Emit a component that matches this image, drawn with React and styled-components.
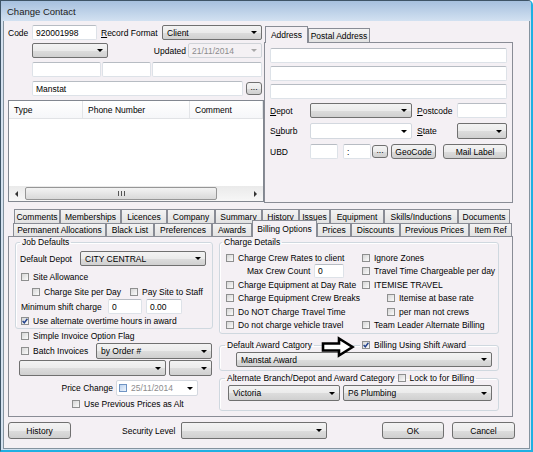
import React from 'react';
import styled, { createGlobalStyle } from 'styled-components';

const GlobalStyle = createGlobalStyle`
  html, body { margin: 0; padding: 0; background: #fff; }
  body {
    font-family: "Liberation Sans", Arial, sans-serif;
    font-size: 8.5px;
    color: #000;
  }
  * { box-sizing: border-box; }
`;

const row1Tabs = [
  ['Comments', 46], ['Memberships', 61], ['Licences', 46], ['Company', 48],
  ['Summary', 47], ['History', 37], ['Issues', 31], ['Equipment', 54],
  ['Skills/Inductions', 74], ['Documents', 52],
];

const row2Tabs = [
  ['Permanent Allocations', 93], ['Black List', 48], ['Preferences', 58],
  ['Awards', 40], ['Billing Options', 65, true], ['Prices', 34],
  ['Discounts', 49], ['Previous Prices', 69], ['Item Ref', 43],
];

const chargeRows = [
  ['Charge Crew Rates to client', 'Ignore Zones'],
  ['MAX', 'Travel Time Chargeable per day'],
  ['Charge Equipment at Day Rate', 'ITEMISE TRAVEL'],
  ['Charge Equipment Crew Breaks', '>Itemise at base rate'],
  ['Do NOT Charge Travel Time', '>per man not crews'],
  ['Do not charge vehicle travel', 'Team Leader Alternate Billing'],
];

const Combo = ({ w, h = 15, ml, text, edit }) => (
  <ComboBox $w={w} $h={h} $ml={ml} $edit={edit}>
    <ComboText>{text}</ComboText>
    <DropArrow />
  </ComboBox>
);

const Check = ({ label, checked, ml, w }) => (
  <CheckItem $ml={ml} $w={w}>
    <Box>
      {checked && (
        <svg width="6" height="6" viewBox="0 0 6 6">
          <path d="M0.6 3 L2.3 4.8 L5.4 0.8" fill="none" stroke="#24428c" strokeWidth="1.4" />
        </svg>
      )}
    </Box>
    {label && <span>{label}</span>}
  </CheckItem>
);

const App = () => {
  return (
    <Window>
      <GlobalStyle />
      <TitleBar>Change Contact</TitleBar>
      <Client>
        <Top>
          <LeftCol>
            <Row $mt={4}>
              <Label $w={24}>Code</Label>
              <Field $w={65}>920001998</Field>
              <Label $w={61} $ml={4}><u>R</u>ecord Format</Label>
              <Combo w={100} text="Client" />
            </Row>
            <Row $mt={3}>
              <Label $w={24} />
              <Combo w={76} />
              <Label $w={80} $right $pr={2}>Updated</Label>
              <DateBox $w={74} $dim>
                <ComboText $dim>21/11/2014</ComboText>
                <DropArrow $dim />
              </DateBox>
            </Row>
            <Row $mt={4}>
              <Label $w={24} />
              <Field $w={69} />
              <Field $w={49} $ml={1} />
              <Field $w={110} $ml={1} />
            </Row>
            <Row $mt={4}>
              <Label $w={24} />
              <Field $w={211}>Manstat</Field>
              <SmallBtn $ml={3}>...</SmallBtn>
            </Row>
            <ListBox>
              <ListHeader>
                <HeadCell $w={74}>Type</HeadCell>
                <HeadCell $w={107}>Phone Number</HeadCell>
                <HeadCell>Comment</HeadCell>
              </ListHeader>
              <ListBody />
              <HScroll>
                <ScrollBtn><TriLeft /></ScrollBtn>
                <Thumb><Grip /></Thumb>
                <ScrollBtn $right><TriRight /></ScrollBtn>
              </HScroll>
            </ListBox>
          </LeftCol>

          <AddrTabs>
            <TabStrip $h={17} $pl={1}>
              <Tab $w={43} $h={14} $active>Address</Tab>
              <Tab $w={62} $h={14}>Postal Address</Tab>
            </TabStrip>
            <AddrPanel>
              <Field $w={237} />
              <Field $w={237} $mt={3} />
              <Field $w={237} $mt={3} />
              <Row $mt={4}>
                <Label $w={40}><u>D</u>epot</Label>
                <Combo w={102} />
                <Label $w={40} $ml={5}><u>P</u>ostcode</Label>
                <Field $w={50} />
              </Row>
              <Row $mt={5} $h={16}>
                <Label $w={40}>S<u>u</u>burb</Label>
                <Combo w={102} h={16} edit />
                <Label $w={40} $ml={5}><u>S</u>tate</Label>
                <Combo w={50} h={16} />
              </Row>
              <Row $mt={5}>
                <Label $w={40}>UBD</Label>
                <Field $w={28} />
                <Field $w={28} $ml={5}>:</Field>
                <SmallBtn $ml={1}>...</SmallBtn>
                <Btn $w={45} $h={15} $ml={3}>GeoCode</Btn>
                <Btn $w={64} $h={15} $ml={7}>Mail Label</Btn>
              </Row>
            </AddrPanel>
          </AddrTabs>
        </Top>

        <Tabs>
          <TabStrip $h={14} $pl={6}>
            {row1Tabs.map(([name, w]) => (
              <Tab key={name} $w={w} $h={14}>{name}</Tab>
            ))}
          </TabStrip>
          <TabStrip $h={13} $pl={5} $z={2}>
            {row2Tabs.map(([name, w, active]) => (
              <Tab key={name} $w={w} $h={13} $active={active}>{name}</Tab>
            ))}
          </TabStrip>
          <Panel>
            <LeftPane>
              <Group $h={92}>
                <Legend>Job Defaults</Legend>
                <Row $mt={4}>
                  <Label $w={60}>Default Depot</Label>
                  <Combo w={126} text="CITY CENTRAL" />
                </Row>
                <Row $mt={5} $h={12}>
                  <Check ml={1} label="Site Allowance" />
                </Row>
                <Row $mt={3} $h={12}>
                  <Check ml={12} w={98} label="Charge Site per Day" />
                  <Check label="Pay Site to Staff" />
                </Row>
                <Row $mt={1}>
                  <Label $w={87} $ml={1}>Minimum shift charge</Label>
                  <Field $w={34}>0</Field>
                  <Field $w={36} $ml={4}>0.00</Field>
                </Row>
                <Row $mt={1} $h={12}>
                  <Check ml={1} checked label="Use alternate overtime hours in award" />
                </Row>
              </Group>
              <Row $mt={1} $h={12}>
                <Check ml={6} label="Simple Invoice Option Flag" />
              </Row>
              <Row $mt={1} $h={16}>
                <Check ml={6} w={75} label="Batch Invoices" />
                <Combo w={116} h={16} text="by Order #" />
              </Row>
              <Row $mt={1} $h={16}>
                <Combo w={147} h={16} ml={4} />
                <Combo w={43} h={16} ml={3} />
              </Row>
              <Row $mt={4} $h={16}>
                <Label $w={101} $right $pr={3}>Price Change</Label>
                <DateBox $w={82} $h={16}>
                  <MiniCheck />
                  <ComboText $dim>25/11/2014</ComboText>
                  <DropArrow />
                </DateBox>
              </Row>
              <Row $mt={2} $h={12}>
                <Check ml={57} label="Use Previous Prices as Alt" />
              </Row>
            </LeftPane>

            <RightPane>
              <Group $h={97} $pl={6}>
                <Legend $ml={-4}>Charge Details</Legend>
                <ChargeGrid>
                  {chargeRows.flatMap(([a, b]) => [
                    a === 'MAX' ? (
                      <Row key={a} $h={13.5}>
                        <Label $w={67} $ml={21}>Max Crew Count</Label>
                        <Field $w={30} $h={14}>0</Field>
                      </Row>
                    ) : (
                      <Check key={a} label={a} />
                    ),
                    b.startsWith('>') ? (
                      <Check key={b} ml={25} label={b.slice(1)} />
                    ) : (
                      <Check key={b} label={b} />
                    ),
                  ])}
                </ChargeGrid>
              </Group>

              <Stack $mt={6}>
                <Group $h={31} $pl={6}>
                  <Legend $ml={-1}>Default Award Catgory</Legend>
                  <Row $mt={2} $h={15}>
                    <Combo w={256} ml={10} text="Manstat Award" />
                  </Row>
                </Group>
                <PointArrow width="34" height="22" viewBox="0 0 34 22">
                  <path
                    d="M2 7.5 H18 V2.5 L31.5 11 L18 19.5 V14.5 H2 Z"
                    fill="#fff"
                    stroke="#000"
                    strokeWidth="2.6"
                  />
                </PointArrow>
                <OnBorder>
                  <Check checked label="Billing Using Shift Award" />
                </OnBorder>
              </Stack>

              <Group $h={38} $pl={6} $mt={2}>
                <Legend $ml={-1}>
                  <LegendInner>
                    Alternate Branch/Depot and Award Category
                    <Check ml={3} label="Lock to for Billing" />
                  </LegendInner>
                </Legend>
                <Row $mt={2} $h={16}>
                  <Combo w={112} h={16} ml={2} text="Victoria" />
                  <Combo w={149} h={16} ml={3} text="P6 Plumbing" />
                </Row>
              </Group>
            </RightPane>
          </Panel>
        </Tabs>

        <Footer>
          <Btn $w={63} $h={17}>History</Btn>
          <Label $w={59} $ml={51}>Security Level</Label>
          <Combo w={146} h={17} />
          <Btn $w={62} $h={17} $ml={55}>OK</Btn>
          <Btn $w={63} $h={17} $ml={8}>Cancel</Btn>
        </Footer>
      </Client>
    </Window>
  );
};

const Window = styled.div`
  width: 533px;
  height: 452px;
  display: flex;
  flex-direction: column;
  background: #d4e1ef;
  border-top: 1px solid #3e5466;
  border-left: 1px solid #3e5466;
  border-right: 2px solid #1fb0e2;
  border-bottom: 2px solid #1fb0e2;
  border-top-right-radius: 5px;
  overflow: hidden;
`;

const TitleBar = styled.div`
  height: 20px;
  flex: none;
  display: flex;
  align-items: center;
  padding-left: 6px;
  background: linear-gradient(#a6c0de, #d2e1f1);
  font-size: 9.5px;
  color: #1b1b1b;
`;

const Client = styled.div`
  flex: 1;
  margin: 0 1px 1px 2px;
  padding-left: 4px;
  background: #f4f0f4;
  border: 1px solid #84939f;
  border-top: none;
  display: flex;
  flex-direction: column;
`;

const Top = styled.div`
  display: flex;
  height: 183px;
  flex: none;
`;

const LeftCol = styled.div`
  width: 256px;
  flex: none;
  display: flex;
  flex-direction: column;
`;

const Row = styled.div`
  display: flex;
  align-items: center;
  flex: none;
  height: ${p => p.$h || 15}px;
  margin-top: ${p => p.$mt || 0}px;
`;

const Label = styled.span`
  flex: none;
  width: ${p => (p.$w ? `${p.$w}px` : 'auto')};
  margin-left: ${p => p.$ml || 0}px;
  padding-right: ${p => p.$pr || 0}px;
  text-align: ${p => (p.$right ? 'right' : 'left')};
  white-space: nowrap;
`;

const Field = styled.div`
  flex: none;
  width: ${p => p.$w}px;
  height: ${p => p.$h || 15}px;
  margin-left: ${p => p.$ml || 0}px;
  margin-top: ${p => p.$mt || 0}px;
  display: flex;
  align-items: center;
  padding: 0 3px;
  background: #fff;
  border: 1px solid #dde2e8;
  border-top-color: #b7bcc3;
  border-radius: 2px;
  white-space: nowrap;
  overflow: hidden;
`;

const ComboBox = styled.div`
  flex: none;
  width: ${p => p.$w}px;
  height: ${p => p.$h}px;
  margin-left: ${p => p.$ml || 0}px;
  display: flex;
  align-items: center;
  padding-left: 3px;
  border: 1px solid ${p => (p.$edit ? '#d3d8df' : '#707070')};
  border-radius: 2px;
  background: ${p =>
    p.$edit
      ? '#fff'
      : 'linear-gradient(#f3f3f3 0%, #ebebeb 50%, #dddddd 51%, #d0d0d0 100%)'};
  white-space: nowrap;
  overflow: hidden;
`;

const DateBox = styled(ComboBox)`
  height: ${p => p.$h || 15}px;
  background: ${p => (p.$dim ? '#f4f1f4' : '#fff')};
  border: 1px solid ${p => (p.$dim ? '#cfd3d8' : '#d3d8df')};
  padding-left: 2px;
`;

const ComboText = styled.span`
  color: ${p => (p.$dim ? '#8c8c8c' : '#000')};
  margin-left: 1px;
`;

const DropArrow = styled.span`
  margin-left: auto;
  margin-right: 4px;
  flex: none;
  width: 0;
  height: 0;
  border-left: 3px solid transparent;
  border-right: 3px solid transparent;
  border-top: 3px solid ${p => (p.$dim ? '#a8a8a8' : '#000')};
`;

const MiniCheck = styled.span`
  width: 8px;
  height: 8px;
  flex: none;
  margin-right: 3px;
  border: 1px solid #6f94c4;
  background: linear-gradient(135deg, #bcd3ef, #eef4fb);
`;

const Btn = styled.button`
  flex: none;
  width: ${p => p.$w}px;
  height: ${p => p.$h}px;
  margin-left: ${p => p.$ml || 0}px;
  padding: 0;
  font: inherit;
  color: #000;
  border: 1px solid #707070;
  border-radius: 3px;
  background: linear-gradient(#f3f3f3 0%, #ebebeb 50%, #dddddd 51%, #cfcfcf 100%);
  white-space: nowrap;
`;

const SmallBtn = styled(Btn)`
  width: 16px;
  height: 13px;
  line-height: 8px;
  padding-bottom: 3px;
`;

const CheckItem = styled.label`
  display: flex;
  align-items: center;
  gap: 4px;
  flex: none;
  width: ${p => (p.$w ? `${p.$w}px` : 'auto')};
  margin-left: ${p => p.$ml || 0}px;
  white-space: nowrap;
`;

const Box = styled.span`
  width: 8px;
  height: 8px;
  flex: none;
  display: flex;
  align-items: center;
  justify-content: center;
  border: 1px solid #8e8f8f;
  background: linear-gradient(135deg, #d6d6d6, #fbfbfb);
`;

const ListBox = styled.div`
  margin-top: 4px;
  width: 256px;
  height: 102px;
  flex: none;
  display: flex;
  flex-direction: column;
  background: #fff;
  border: 1px solid #828790;
`;

const ListHeader = styled.div`
  display: flex;
  height: 18px;
  flex: none;
  background: linear-gradient(#fff, #f6f7f9);
  border-bottom: 1px solid #e1e3e6;
`;

const HeadCell = styled.div`
  width: ${p => (p.$w ? `${p.$w}px` : 'auto')};
  flex: ${p => (p.$w ? 'none' : 1)};
  display: flex;
  align-items: center;
  padding-left: 5px;
  border-right: 1px solid #e3e5e8;
  white-space: nowrap;
`;

const ListBody = styled.div`
  flex: 1;
`;

const HScroll = styled.div`
  height: 15px;
  flex: none;
  display: flex;
  align-items: center;
  background: linear-gradient(#eaeaea, #f7f7f7);
`;

const ScrollBtn = styled.div`
  width: 15px;
  height: 15px;
  flex: none;
  margin-left: ${p => (p.$right ? 'auto' : 0)};
  display: flex;
  align-items: center;
  justify-content: center;
`;

const TriLeft = styled.span`
  width: 0;
  height: 0;
  border-top: 3px solid transparent;
  border-bottom: 3px solid transparent;
  border-right: 3px solid #333;
`;

const TriRight = styled(TriLeft)`
  border-right: none;
  border-left: 3px solid #333;
`;

const Thumb = styled.div`
  width: 192px;
  height: 13px;
  margin-left: 1px;
  display: flex;
  align-items: center;
  justify-content: center;
  border: 1px solid #969696;
  border-radius: 2px;
  background: linear-gradient(#f3f3f3, #d9d9d9);
`;

const Grip = styled.span`
  width: 7px;
  height: 5px;
  background: repeating-linear-gradient(90deg, #555 0 1px, transparent 1px 3px);
`;

const AddrTabs = styled.div`
  width: 249px;
  flex: none;
  margin-top: 4px;
  display: flex;
  flex-direction: column;
`;

const TabStrip = styled.div`
  display: flex;
  align-items: flex-end;
  flex: none;
  height: ${p => p.$h}px;
  padding-left: ${p => p.$pl}px;
  position: relative;
  z-index: ${p => p.$z || 1};
`;

const Tab = styled.div`
  flex: none;
  width: ${p => p.$w}px;
  height: ${p => (p.$active ? 17 : p.$h)}px;
  margin-bottom: ${p => (p.$active ? -1 : 0)}px;
  display: flex;
  align-items: center;
  justify-content: center;
  padding-bottom: ${p => (p.$active ? 1 : 0)}px;
  border: 1px solid #898c95;
  border-bottom: none;
  background: ${p => (p.$active ? '#f4f0f4' : 'linear-gradient(#f3f3f3, #e2e2e2)')};
  white-space: nowrap;
  position: relative;
  z-index: ${p => (p.$active ? 3 : 1)};
`;

const AddrPanel = styled.div`
  height: 161px;
  flex: none;
  padding: 5px 0 0 5px;
  border: 1px solid #898c95;
  display: flex;
  flex-direction: column;
`;

const Tabs = styled.div`
  margin-top: 5px;
  width: 505px;
  flex: none;
  display: flex;
  flex-direction: column;
`;

const Panel = styled.div`
  height: 181px;
  flex: none;
  display: flex;
  gap: 6px;
  padding-left: 6px;
  border: 1px solid #898c95;
`;

const LeftPane = styled.div`
  width: 198px;
  flex: none;
  display: flex;
  flex-direction: column;
`;

const RightPane = styled.div`
  width: 280px;
  flex: none;
  display: flex;
  flex-direction: column;
`;

const Group = styled.fieldset`
  margin: ${p => p.$mt || 0}px 0 0 0;
  padding: 0 4px 0 ${p => p.$pl ?? 4}px;
  height: ${p => p.$h}px;
  flex: none;
  min-width: 0;
  border: 1px solid #cfd8df;
  border-radius: 3px;
  box-shadow: inset 1px 1px 0 #fff;
`;

const Legend = styled.legend`
  padding: 0 2px;
  margin-left: ${p => p.$ml || 0}px;
  height: 10px;
  line-height: 10px;
  white-space: nowrap;
`;

const LegendInner = styled.span`
  display: inline-flex;
  align-items: center;
`;

const ChargeGrid = styled.div`
  display: grid;
  grid-template-columns: 136px 1fr;
  grid-auto-rows: 13.5px;
  align-items: center;
  margin-top: 4px;
`;

const Stack = styled.div`
  position: relative;
  margin-top: ${p => p.$mt || 0}px;
  flex: none;
`;

const PointArrow = styled.svg`
  position: absolute;
  left: 102px;
  top: -4px;
`;

const OnBorder = styled.div`
  position: absolute;
  left: 141px;
  top: 0;
  height: 10px;
  padding: 0 2px;
  display: flex;
  align-items: center;
  background: #f4f0f4;
`;

const Footer = styled.div`
  display: flex;
  align-items: center;
  margin-top: 5px;
  height: 17px;
  flex: none;
`;

export default App;
